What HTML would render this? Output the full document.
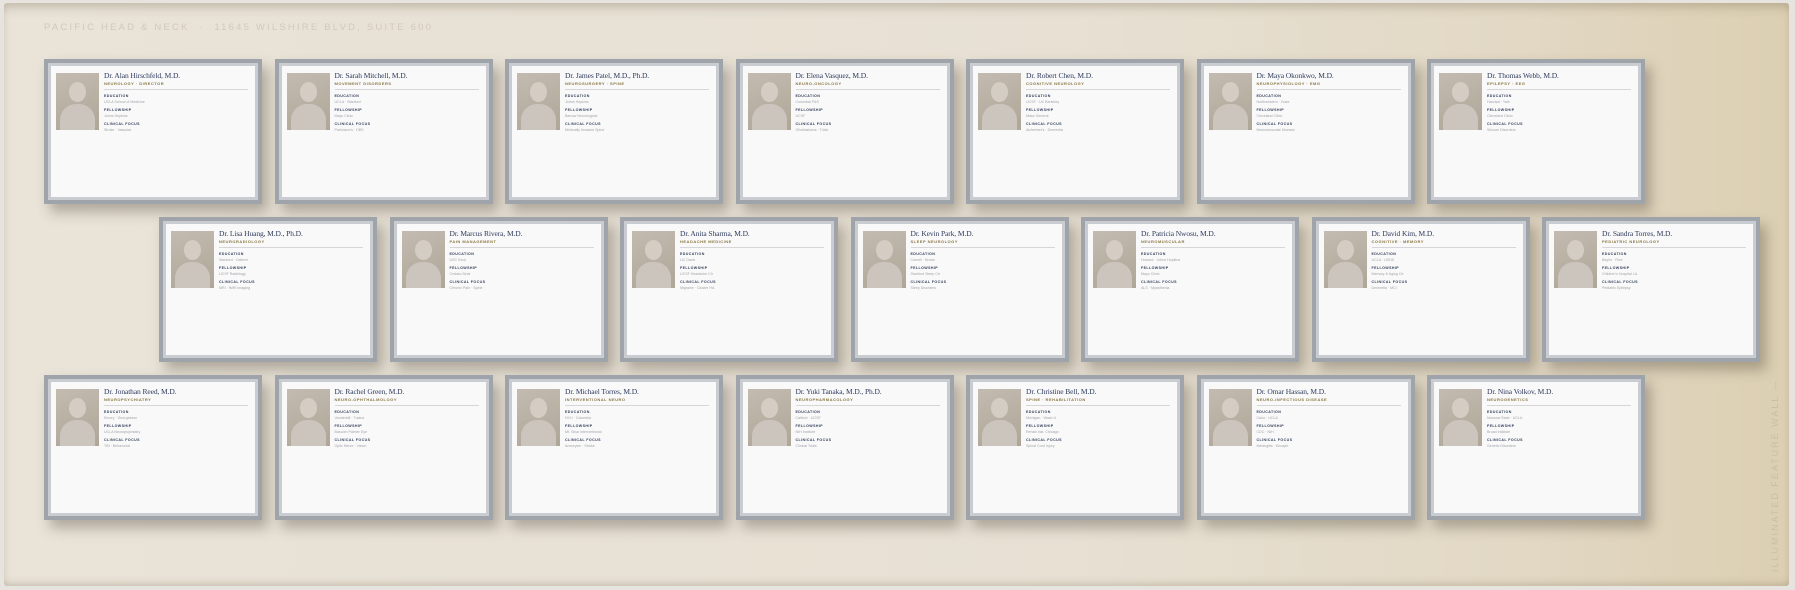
<!DOCTYPE html><html><head><meta charset="utf-8"><style>
*{margin:0;padding:0;box-sizing:border-box}
body{width:1795px;height:590px;background:#e7e4e0;overflow:hidden;position:relative;font-family:"Liberation Sans",sans-serif}
.panel{position:absolute;left:4px;top:3px;width:1785px;height:583px;border-radius:3px;background:linear-gradient(90deg,#e9e3d8 0%,#e7e0d3 60%,#e2d8c4 85%,#dccfb2 100%);box-shadow:inset 0 8px 10px -4px rgba(120,105,80,.35),inset 0 -6px 8px -4px rgba(120,105,80,.3)}
.hdr{position:absolute;left:44px;top:22px;font-size:9.5px;letter-spacing:2.2px;color:#d0c9bc}
.vt{position:absolute;left:1770px;top:572px;transform:rotate(-90deg);transform-origin:0 0;font-size:9px;letter-spacing:2px;color:#c8bea9;white-space:nowrap}
.card{position:absolute;width:218px;height:145px;background:#9fa4aa;padding:4px;box-shadow:6px 8px 12px rgba(70,60,45,.35)}
.in{width:100%;height:100%;background:#c9cdd2;padding:3px}
.w{position:relative;width:100%;height:100%;background:#f9f9fa}
.ph{position:absolute;left:5px;top:7px;width:43px;height:57px;background:linear-gradient(160deg,#c3bbb0,#aea697);overflow:hidden}
.ph:before{content:"";position:absolute;left:13px;top:9px;width:17px;height:20px;border-radius:50%;background:#d4cdc4}
.ph:after{content:"";position:absolute;left:4px;top:31px;width:35px;height:30px;border-radius:16px 16px 0 0;background:#ccc5bd}
.tx{position:absolute;left:53px;top:5px;right:7px}
.n{font-family:"Liberation Serif",serif;font-size:7.5px;line-height:9px;color:#2d3a5a;letter-spacing:-.1px;white-space:nowrap}
.s{font-size:4px;line-height:5px;font-weight:bold;color:#8a7640;letter-spacing:.5px;margin-top:1px;padding-bottom:3px;border-bottom:1px solid #d6d6d8;text-transform:uppercase;white-space:nowrap}
.l{font-size:3.6px;line-height:5px;font-weight:bold;color:#33405a;letter-spacing:.4px;margin-top:3px;text-transform:uppercase}
.l.f{margin-top:4px}
.v{font-size:3.6px;line-height:5px;color:#a2a4a8;margin-top:1px;white-space:nowrap}
</style></head><body>
<div class="panel"></div>
<div class="hdr">PACIFIC HEAD &amp; NECK &nbsp;·&nbsp; 11645 WILSHIRE BLVD, SUITE 600</div>
<div class="vt">ILLUMINATED FEATURE WALL —</div>
<div id="c"></div>
<script>
var d=[
["Dr. Alan Hirschfeld, M.D.","Neurology · Director","UCLA School of Medicine","Johns Hopkins","Stroke · Vascular"],
["Dr. Sarah Mitchell, M.D.","Movement Disorders","UCLA · Stanford","Mayo Clinic","Parkinson's · DBS"],
["Dr. James Patel, M.D., Ph.D.","Neurosurgery · Spine","Johns Hopkins","Barrow Neurological","Minimally Invasive Spine"],
["Dr. Elena Vasquez, M.D.","Neuro-Oncology","Columbia P&S","UCSF","Glioblastoma · Trials"],
["Dr. Robert Chen, M.D.","Cognitive Neurology","UCSF · UC Berkeley","Mass General","Alzheimer's · Dementia"],
["Dr. Maya Okonkwo, M.D.","Neurophysiology · EMG","Northwestern · Duke","Cleveland Clinic","Neuromuscular Disease"],
["Dr. Thomas Webb, M.D.","Epilepsy · EEG","Harvard · Yale","Cleveland Clinic","Seizure Disorders"],
["Dr. Lisa Huang, M.D., Ph.D.","Neuroradiology","Stanford · Caltech","UCSF Radiology","MRI · fMRI Imaging"],
["Dr. Marcus Rivera, M.D.","Pain Management","USC Keck","Cedars-Sinai","Chronic Pain · Spine"],
["Dr. Anita Sharma, M.D.","Headache Medicine","UC Davis","UCSF Headache Ctr","Migraine · Cluster HA"],
["Dr. Kevin Park, M.D.","Sleep Neurology","Cornell · Brown","Stanford Sleep Ctr","Sleep Disorders"],
["Dr. Patricia Nwosu, M.D.","Neuromuscular","Howard · Johns Hopkins","Mayo Clinic","ALS · Myasthenia"],
["Dr. David Kim, M.D.","Cognitive · Memory","UCLA · USDD","Memory & Aging Ctr","Dementia · MCI"],
["Dr. Sandra Torres, M.D.","Pediatric Neurology","Baylor · Rice","Children's Hospital LA","Pediatric Epilepsy"],
["Dr. Jonathan Reed, M.D.","Neuropsychiatry","Emory · Georgetown","UCLA Neuropsychiatry","TBI · Behavioral"],
["Dr. Rachel Green, M.D.","Neuro-Ophthalmology","Vanderbilt · Tulane","Bascom Palmer Eye","Optic Nerve · Vision"],
["Dr. Michael Torres, M.D.","Interventional Neuro","NYU · Columbia","Mt. Sinai Interventional","Aneurysm · Stroke"],
["Dr. Yuki Tanaka, M.D., Ph.D.","Neuropharmacology","Caltech · UCSF","NIH Institute","Clinical Trials"],
["Dr. Christine Bell, M.D.","Spine · Rehabilitation","Michigan · Wash U","Rehab Inst. Chicago","Spinal Cord Injury"],
["Dr. Omar Hassan, M.D.","Neuro-Infectious Disease","Cairo · UCLA","CDC · NIH","Meningitis · Encaph."],
["Dr. Nina Volkov, M.D.","Neurogenetics","Moscow State · UCLA","Broad Institute","Genetic Disorders"]];
var h="";
d.forEach(function(c,i){var r=Math.floor(i/7),k=i%7;var x=(r==1?159:44)+k*230.5,y=59+r*158;
h+='<div class="card" style="left:'+x+'px;top:'+y+'px"><div class="in"><div class="w"><div class="ph"></div><div class="tx"><div class="n">'+c[0]+'</div><div class="s">'+c[1]+'</div><div class="l f">Education</div><div class="v">'+c[2]+'</div><div class="l">Fellowship</div><div class="v">'+c[3]+'</div><div class="l">Clinical Focus</div><div class="v">'+c[4]+'</div></div></div></div></div>';});
document.getElementById("c").innerHTML=h;
</script>
</body></html>
